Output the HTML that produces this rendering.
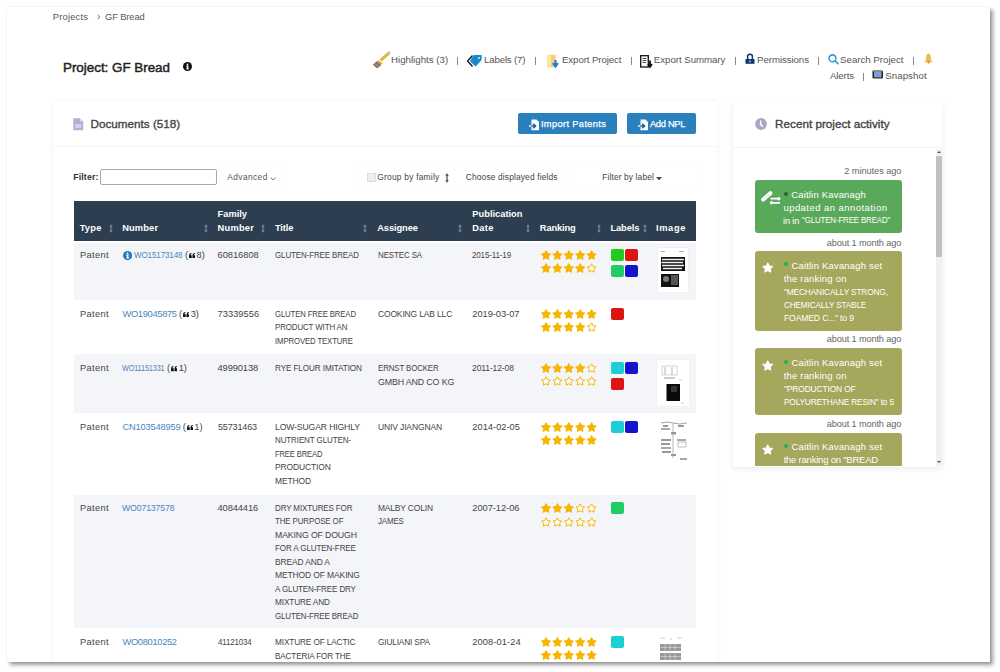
<!DOCTYPE html>
<html><head><meta charset="utf-8"><style>
html,body{margin:0;padding:0;background:#fff;width:1000px;height:672px;overflow:hidden}
#frame{position:absolute;left:7px;top:7px;width:983px;height:655px;background:#fff;box-shadow:0 0 2px 0.5px rgba(0,0,0,0.08), 2.5px 2.5px 4px rgba(0,0,0,0.38);overflow:hidden}
#inner{position:absolute;left:-7px;top:-7px;width:1000px;height:672px}
.t{position:absolute;white-space:pre;font-family:"Liberation Sans", sans-serif;transform-origin:0 0}
</style></head><body>
<div id="frame"><div id="inner">
<span class="t" style="left:52.84px;top:12.99px;font-size:9.3px;line-height:9.3px;font-weight:400;color:#555;letter-spacing:0.201px">Projects</span>
<span class="t" style="left:96.90px;top:12.40px;font-size:10px;line-height:10px;font-weight:400;color:#666;letter-spacing:0.000px">›</span>
<span class="t" style="left:105.04px;top:12.99px;font-size:9.3px;line-height:9.3px;font-weight:400;color:#555;letter-spacing:-0.102px">GF Bread</span>
<span class="t" style="left:63.00px;top:60.91px;font-size:13.4px;line-height:13.4px;font-weight:400;color:#222;letter-spacing:-0.011px;-webkit-text-stroke:0.45px #222">Project: GF Bread</span>
<svg style="position:absolute;left:183.2px;top:62px" width="9" height="9" viewBox="0 0 9 9"><circle cx="4.5" cy="4.5" r="4.5" fill="#111"/><rect x="3.8" y="3.6" width="1.5" height="3.6" fill="#fff"/><rect x="3.2" y="3.6" width="2.1" height="0.9" fill="#fff"/><rect x="3.2" y="6.4" width="2.8" height="0.9" fill="#fff"/><circle cx="4.5" cy="2.3" r="0.85" fill="#fff"/></svg>
<span class="t" style="left:391.02px;top:55.36px;font-size:9.7px;line-height:9.7px;font-weight:400;color:#555;letter-spacing:0.002px">Highlights (3)</span>
<span class="t" style="left:484.12px;top:55.36px;font-size:9.7px;line-height:9.7px;font-weight:400;color:#555;letter-spacing:-0.188px">Labels (7)</span>
<span class="t" style="left:562.02px;top:55.36px;font-size:9.7px;line-height:9.7px;font-weight:400;color:#555;letter-spacing:-0.111px">Export Project</span>
<span class="t" style="left:653.82px;top:55.36px;font-size:9.7px;line-height:9.7px;font-weight:400;color:#555;letter-spacing:-0.042px">Export Summary</span>
<span class="t" style="left:757.12px;top:55.36px;font-size:9.7px;line-height:9.7px;font-weight:400;color:#555;letter-spacing:-0.087px">Permissions</span>
<span class="t" style="left:840.12px;top:55.36px;font-size:9.7px;line-height:9.7px;font-weight:400;color:#555;letter-spacing:-0.019px">Search Project</span>
<span class="t" style="left:830.02px;top:71.35px;font-size:9.7px;line-height:9.7px;font-weight:400;color:#555;letter-spacing:-0.133px">Alerts</span>
<span class="t" style="left:885.22px;top:71.35px;font-size:9.7px;line-height:9.7px;font-weight:400;color:#555;letter-spacing:0.066px">Snapshot</span>
<div style="position:absolute;left:457.2px;top:56.5px;width:1px;height:8.5px;background:#888"></div>
<div style="position:absolute;left:534.5px;top:56.5px;width:1px;height:8.5px;background:#888"></div>
<div style="position:absolute;left:630.9px;top:56.5px;width:1px;height:8.5px;background:#888"></div>
<div style="position:absolute;left:735.0px;top:56.5px;width:1px;height:8.5px;background:#888"></div>
<div style="position:absolute;left:818.1px;top:56.5px;width:1px;height:8.5px;background:#888"></div>
<div style="position:absolute;left:913.1px;top:56.5px;width:1px;height:8.5px;background:#888"></div>
<div style="position:absolute;left:863.1px;top:72.5px;width:1px;height:8.5px;background:#888"></div>
<div style="position:absolute;left:53px;top:101px;width:664px;height:600px;background:#fff;box-shadow:0 0 5px rgba(0,0,0,0.07)"></div>
<div style="position:absolute;left:53px;top:146px;width:664px;height:1px;background:#f3f3f3"></div>
<div style="position:absolute;left:733px;top:102px;width:209px;height:365px;background:#fff;box-shadow:0 2px 6px rgba(0,0,0,0.08)"></div>
<div style="position:absolute;left:733px;top:147px;width:209px;height:1px;background:#f3f3f3"></div>
<span class="t" style="left:90.60px;top:117.56px;font-size:11.7px;line-height:11.7px;font-weight:400;color:#444;letter-spacing:-0.004px;-webkit-text-stroke:0.35px #444">Documents (518)</span>
<span class="t" style="left:775.10px;top:118.06px;font-size:11.7px;line-height:11.7px;font-weight:400;color:#444;letter-spacing:0.003px;-webkit-text-stroke:0.35px #444">Recent project activity</span>
<div style="position:absolute;left:518px;top:112.8px;width:99px;height:21.7px;background:#2980bd;border-radius:2px"></div>
<div style="position:absolute;left:627px;top:112.8px;width:69px;height:21.7px;background:#2980bd;border-radius:2px"></div>
<span class="t" style="left:540.94px;top:119.69px;font-size:9.3px;line-height:9.3px;font-weight:400;color:#fff;letter-spacing:0.349px;-webkit-text-stroke:0.25px #fff">Import Patents</span>
<span class="t" style="left:649.94px;top:119.69px;font-size:9.3px;line-height:9.3px;font-weight:400;color:#fff;letter-spacing:-0.286px;-webkit-text-stroke:0.25px #fff">Add NPL</span>
<span class="t" style="left:73.17px;top:172.52px;font-size:8.8px;line-height:8.8px;font-weight:700;color:#333;letter-spacing:0.144px">Filter:</span>
<div style="position:absolute;left:100.2px;top:168.5px;width:115px;height:14.5px;border:1px solid #a9a9a9;border-radius:2px;background:#fff"></div>
<span class="t" style="left:227.30px;top:172.86px;font-size:8.4px;line-height:8.4px;font-weight:400;color:#555;letter-spacing:0.393px">Advanced</span>
<div style="position:absolute;left:367.3px;top:173px;width:8.5px;height:8.5px;background:#eee;border:1px solid #ddd;box-sizing:border-box"></div>
<span class="t" style="left:377.30px;top:172.86px;font-size:8.4px;line-height:8.4px;font-weight:400;color:#444;letter-spacing:0.232px">Group by family</span>
<span class="t" style="left:465.80px;top:172.86px;font-size:8.4px;line-height:8.4px;font-weight:400;color:#444;letter-spacing:0.147px">Choose displayed fields</span>
<span class="t" style="left:602.30px;top:172.86px;font-size:8.4px;line-height:8.4px;font-weight:400;color:#444;letter-spacing:0.121px">Filter by label</span>
<div style="position:absolute;left:74px;top:201px;width:622px;height:40px;background:#2c3e50"></div>
<span class="t" style="left:79.64px;top:223.69px;font-size:9.3px;line-height:9.3px;font-weight:700;color:#fff;letter-spacing:0.228px">Type</span>
<span class="t" style="left:122.14px;top:223.69px;font-size:9.3px;line-height:9.3px;font-weight:700;color:#fff;letter-spacing:0.152px">Number</span>
<span class="t" style="left:217.54px;top:210.29px;font-size:9.3px;line-height:9.3px;font-weight:700;color:#fff;letter-spacing:0.009px">Family</span>
<span class="t" style="left:217.54px;top:223.69px;font-size:9.3px;line-height:9.3px;font-weight:700;color:#fff;letter-spacing:0.232px">Number</span>
<span class="t" style="left:274.94px;top:223.69px;font-size:9.3px;line-height:9.3px;font-weight:700;color:#fff;letter-spacing:-0.113px">Title</span>
<span class="t" style="left:377.24px;top:223.69px;font-size:9.3px;line-height:9.3px;font-weight:700;color:#fff;letter-spacing:-0.092px">Assignee</span>
<span class="t" style="left:472.34px;top:210.29px;font-size:9.3px;line-height:9.3px;font-weight:700;color:#fff;letter-spacing:-0.001px">Publication</span>
<span class="t" style="left:472.34px;top:223.69px;font-size:9.3px;line-height:9.3px;font-weight:700;color:#fff;letter-spacing:0.281px">Date</span>
<span class="t" style="left:539.84px;top:223.69px;font-size:9.3px;line-height:9.3px;font-weight:700;color:#fff;letter-spacing:-0.148px">Ranking</span>
<span class="t" style="left:610.44px;top:223.69px;font-size:9.3px;line-height:9.3px;font-weight:700;color:#fff;letter-spacing:-0.091px">Labels</span>
<span class="t" style="left:655.94px;top:223.69px;font-size:9.3px;line-height:9.3px;font-weight:700;color:#fff;letter-spacing:0.656px">Image</span>
<svg style="position:absolute;left:108.6px;top:223.8px;opacity:.5" width="4" height="9" viewBox="0 0 4 9"><path d="M2 0.2 L3.8 2.8 H2.6 V6.2 H3.8 L2 8.8 L0.2 6.2 H1.4 V2.8 H0.2 Z" fill="#ccc"/></svg>
<svg style="position:absolute;left:203.7px;top:223.8px;opacity:.5" width="4" height="9" viewBox="0 0 4 9"><path d="M2 0.2 L3.8 2.8 H2.6 V6.2 H3.8 L2 8.8 L0.2 6.2 H1.4 V2.8 H0.2 Z" fill="#ccc"/></svg>
<svg style="position:absolute;left:261px;top:223.8px;opacity:.5" width="4" height="9" viewBox="0 0 4 9"><path d="M2 0.2 L3.8 2.8 H2.6 V6.2 H3.8 L2 8.8 L0.2 6.2 H1.4 V2.8 H0.2 Z" fill="#ccc"/></svg>
<svg style="position:absolute;left:363.4px;top:223.8px;opacity:.5" width="4" height="9" viewBox="0 0 4 9"><path d="M2 0.2 L3.8 2.8 H2.6 V6.2 H3.8 L2 8.8 L0.2 6.2 H1.4 V2.8 H0.2 Z" fill="#ccc"/></svg>
<svg style="position:absolute;left:458.3px;top:223.8px;opacity:.5" width="4" height="9" viewBox="0 0 4 9"><path d="M2 0.2 L3.8 2.8 H2.6 V6.2 H3.8 L2 8.8 L0.2 6.2 H1.4 V2.8 H0.2 Z" fill="#ccc"/></svg>
<svg style="position:absolute;left:526.4px;top:223.8px;opacity:.5" width="4" height="9" viewBox="0 0 4 9"><path d="M2 0.2 L3.8 2.8 H2.6 V6.2 H3.8 L2 8.8 L0.2 6.2 H1.4 V2.8 H0.2 Z" fill="#ccc"/></svg>
<svg style="position:absolute;left:597px;top:223.8px;opacity:.5" width="4" height="9" viewBox="0 0 4 9"><path d="M2 0.2 L3.8 2.8 H2.6 V6.2 H3.8 L2 8.8 L0.2 6.2 H1.4 V2.8 H0.2 Z" fill="#ccc"/></svg>
<svg style="position:absolute;left:642.6px;top:223.8px;opacity:.5" width="4" height="9" viewBox="0 0 4 9"><path d="M2 0.2 L3.8 2.8 H2.6 V6.2 H3.8 L2 8.8 L0.2 6.2 H1.4 V2.8 H0.2 Z" fill="#ccc"/></svg>
<div style="position:absolute;left:74px;top:241px;width:622px;height:59px;background:#f4f5f8"></div>
<div style="position:absolute;left:74px;top:300px;width:622px;height:54px;background:#fff"></div>
<div style="position:absolute;left:74px;top:354px;width:622px;height:59px;background:#f4f5f8"></div>
<div style="position:absolute;left:74px;top:413px;width:622px;height:81.5px;background:#fff"></div>
<div style="position:absolute;left:74px;top:494.5px;width:622px;height:133.5px;background:#f4f5f8"></div>
<div style="position:absolute;left:74px;top:628px;width:622px;height:72px;background:#fff"></div>
<div style="position:absolute;left:74px;top:241px;width:622px;height:1.5px;background:#fff"></div>
<span class="t" style="left:80.04px;top:250.69px;font-size:9.3px;line-height:9.3px;font-weight:400;color:#444;letter-spacing:0.322px">Patent</span>
<span class="t" style="left:134.44px;top:250.69px;font-size:9.3px;line-height:9.3px;font-weight:400;color:#4a87bd;letter-spacing:-0.150px;transform:scaleX(0.8657)">WO15173148</span>
<span class="t" style="left:184.94px;top:250.69px;font-size:9.3px;line-height:9.3px;font-weight:400;color:#444;letter-spacing:0.000px">(</span>
<svg style="position:absolute;left:188.9px;top:252.79999999999998px" width="6.4" height="5.5" viewBox="0 0 7 6"><path d="M0 3.2 C0 1.2 1 0.2 2.6 0 L2.8 0.9 C2 1.1 1.6 1.6 1.6 2.5 H3 V5.8 H0 Z M3.8 3.2 C3.8 1.2 4.8 0.2 6.4 0 L6.6 0.9 C5.8 1.1 5.4 1.6 5.4 2.5 H6.8 V5.8 H3.8 Z" fill="#111"/></svg>
<span class="t" style="left:196.54px;top:250.69px;font-size:9.3px;line-height:9.3px;font-weight:400;color:#444;letter-spacing:0.000px">8)</span>
<span class="t" style="left:217.54px;top:250.69px;font-size:9.3px;line-height:9.3px;font-weight:400;color:#444;letter-spacing:-0.025px">60816808</span>
<span class="t" style="left:275.25px;top:250.78px;font-size:9.2px;line-height:9.2px;font-weight:400;color:#444;letter-spacing:-0.150px;transform:scaleX(0.8691)">GLUTEN-FREE BREAD</span>
<span class="t" style="left:377.65px;top:250.78px;font-size:9.2px;line-height:9.2px;font-weight:400;color:#444;letter-spacing:-0.150px;transform:scaleX(0.8687)">NESTEC SA</span>
<span class="t" style="left:472.34px;top:250.69px;font-size:9.3px;line-height:9.3px;font-weight:400;color:#444;letter-spacing:-0.150px;transform:scaleX(0.8589)">2015-11-19</span>
<span class="t" style="left:80.04px;top:309.69px;font-size:9.3px;line-height:9.3px;font-weight:400;color:#444;letter-spacing:0.322px">Patent</span>
<span class="t" style="left:122.44px;top:309.69px;font-size:9.3px;line-height:9.3px;font-weight:400;color:#4a87bd;letter-spacing:-0.308px">WO19045875</span>
<span class="t" style="left:179.04px;top:309.69px;font-size:9.3px;line-height:9.3px;font-weight:400;color:#444;letter-spacing:0.000px">(</span>
<svg style="position:absolute;left:183.0px;top:311.8px" width="6.4" height="5.5" viewBox="0 0 7 6"><path d="M0 3.2 C0 1.2 1 0.2 2.6 0 L2.8 0.9 C2 1.1 1.6 1.6 1.6 2.5 H3 V5.8 H0 Z M3.8 3.2 C3.8 1.2 4.8 0.2 6.4 0 L6.6 0.9 C5.8 1.1 5.4 1.6 5.4 2.5 H6.8 V5.8 H3.8 Z" fill="#111"/></svg>
<span class="t" style="left:190.64px;top:309.69px;font-size:9.3px;line-height:9.3px;font-weight:400;color:#444;letter-spacing:0.000px">3)</span>
<span class="t" style="left:217.54px;top:309.69px;font-size:9.3px;line-height:9.3px;font-weight:400;color:#444;letter-spacing:0.032px">73339556</span>
<span class="t" style="left:275.25px;top:309.78px;font-size:9.2px;line-height:9.2px;font-weight:400;color:#444;letter-spacing:-0.150px;transform:scaleX(0.8426)">GLUTEN FREE BREAD</span>
<span class="t" style="left:275.25px;top:323.23px;font-size:9.2px;line-height:9.2px;font-weight:400;color:#444;letter-spacing:-0.150px;transform:scaleX(0.8632)">PRODUCT WITH AN</span>
<span class="t" style="left:275.25px;top:336.68px;font-size:9.2px;line-height:9.2px;font-weight:400;color:#444;letter-spacing:-0.150px;transform:scaleX(0.8475)">IMPROVED TEXTURE</span>
<span class="t" style="left:377.65px;top:309.78px;font-size:9.2px;line-height:9.2px;font-weight:400;color:#444;letter-spacing:-0.150px;transform:scaleX(0.9216)">COOKING LAB LLC</span>
<span class="t" style="left:472.34px;top:309.69px;font-size:9.3px;line-height:9.3px;font-weight:400;color:#444;letter-spacing:-0.051px">2019-03-07</span>
<span class="t" style="left:80.04px;top:364.10px;font-size:9.3px;line-height:9.3px;font-weight:400;color:#444;letter-spacing:0.322px">Patent</span>
<span class="t" style="left:122.44px;top:364.10px;font-size:9.3px;line-height:9.3px;font-weight:400;color:#4a87bd;letter-spacing:-0.150px;transform:scaleX(0.7795)">WO11151331</span>
<span class="t" style="left:167.04px;top:364.10px;font-size:9.3px;line-height:9.3px;font-weight:400;color:#444;letter-spacing:0.000px">(</span>
<svg style="position:absolute;left:171.0px;top:366.20000000000005px" width="6.4" height="5.5" viewBox="0 0 7 6"><path d="M0 3.2 C0 1.2 1 0.2 2.6 0 L2.8 0.9 C2 1.1 1.6 1.6 1.6 2.5 H3 V5.8 H0 Z M3.8 3.2 C3.8 1.2 4.8 0.2 6.4 0 L6.6 0.9 C5.8 1.1 5.4 1.6 5.4 2.5 H6.8 V5.8 H3.8 Z" fill="#111"/></svg>
<span class="t" style="left:178.64px;top:364.10px;font-size:9.3px;line-height:9.3px;font-weight:400;color:#444;letter-spacing:0.000px">1)</span>
<span class="t" style="left:217.54px;top:364.10px;font-size:9.3px;line-height:9.3px;font-weight:400;color:#444;letter-spacing:-0.111px">49990138</span>
<span class="t" style="left:275.25px;top:364.18px;font-size:9.2px;line-height:9.2px;font-weight:400;color:#444;letter-spacing:-0.150px;transform:scaleX(0.8937)">RYE FLOUR IMITATION</span>
<span class="t" style="left:377.65px;top:364.18px;font-size:9.2px;line-height:9.2px;font-weight:400;color:#444;letter-spacing:-0.150px;transform:scaleX(0.8588)">ERNST BOCKER</span>
<span class="t" style="left:377.65px;top:377.63px;font-size:9.2px;line-height:9.2px;font-weight:400;color:#444;letter-spacing:-0.150px;transform:scaleX(0.9631)">GMBH AND CO KG</span>
<span class="t" style="left:472.34px;top:364.10px;font-size:9.3px;line-height:9.3px;font-weight:400;color:#444;letter-spacing:-0.150px;transform:scaleX(0.9226)">2011-12-08</span>
<span class="t" style="left:80.04px;top:422.69px;font-size:9.3px;line-height:9.3px;font-weight:400;color:#444;letter-spacing:0.322px">Patent</span>
<span class="t" style="left:122.44px;top:422.69px;font-size:9.3px;line-height:9.3px;font-weight:400;color:#4a87bd;letter-spacing:-0.177px">CN103548959</span>
<span class="t" style="left:182.64px;top:422.69px;font-size:9.3px;line-height:9.3px;font-weight:400;color:#444;letter-spacing:0.000px">(</span>
<svg style="position:absolute;left:186.6px;top:424.8px" width="6.4" height="5.5" viewBox="0 0 7 6"><path d="M0 3.2 C0 1.2 1 0.2 2.6 0 L2.8 0.9 C2 1.1 1.6 1.6 1.6 2.5 H3 V5.8 H0 Z M3.8 3.2 C3.8 1.2 4.8 0.2 6.4 0 L6.6 0.9 C5.8 1.1 5.4 1.6 5.4 2.5 H6.8 V5.8 H3.8 Z" fill="#111"/></svg>
<span class="t" style="left:194.24px;top:422.69px;font-size:9.3px;line-height:9.3px;font-weight:400;color:#444;letter-spacing:0.000px">1)</span>
<span class="t" style="left:217.54px;top:422.69px;font-size:9.3px;line-height:9.3px;font-weight:400;color:#444;letter-spacing:-0.150px;transform:scaleX(0.9696)">55731463</span>
<span class="t" style="left:275.25px;top:422.78px;font-size:9.2px;line-height:9.2px;font-weight:400;color:#444;letter-spacing:-0.150px;transform:scaleX(0.9410)">LOW-SUGAR HIGHLY</span>
<span class="t" style="left:275.25px;top:436.23px;font-size:9.2px;line-height:9.2px;font-weight:400;color:#444;letter-spacing:-0.150px;transform:scaleX(0.8745)">NUTRIENT GLUTEN-</span>
<span class="t" style="left:275.25px;top:449.68px;font-size:9.2px;line-height:9.2px;font-weight:400;color:#444;letter-spacing:-0.150px;transform:scaleX(0.8262)">FREE BREAD</span>
<span class="t" style="left:275.25px;top:463.13px;font-size:9.2px;line-height:9.2px;font-weight:400;color:#444;letter-spacing:-0.150px;transform:scaleX(0.9236)">PRODUCTION</span>
<span class="t" style="left:275.25px;top:476.58px;font-size:9.2px;line-height:9.2px;font-weight:400;color:#444;letter-spacing:-0.150px;transform:scaleX(0.9216)">METHOD</span>
<span class="t" style="left:377.65px;top:422.78px;font-size:9.2px;line-height:9.2px;font-weight:400;color:#444;letter-spacing:-0.150px;transform:scaleX(0.9267)">UNIV JIANGNAN</span>
<span class="t" style="left:472.34px;top:422.69px;font-size:9.3px;line-height:9.3px;font-weight:400;color:#444;letter-spacing:0.004px">2014-02-05</span>
<span class="t" style="left:80.04px;top:503.89px;font-size:9.3px;line-height:9.3px;font-weight:400;color:#444;letter-spacing:0.322px">Patent</span>
<span class="t" style="left:122.44px;top:503.89px;font-size:9.3px;line-height:9.3px;font-weight:400;color:#4a87bd;letter-spacing:-0.150px;transform:scaleX(0.9371)">WO07137578</span>
<span class="t" style="left:217.54px;top:503.89px;font-size:9.3px;line-height:9.3px;font-weight:400;color:#444;letter-spacing:-0.111px">40844416</span>
<span class="t" style="left:275.25px;top:503.98px;font-size:9.2px;line-height:9.2px;font-weight:400;color:#444;letter-spacing:-0.150px;transform:scaleX(0.8728)">DRY MIXTURES FOR</span>
<span class="t" style="left:275.25px;top:517.43px;font-size:9.2px;line-height:9.2px;font-weight:400;color:#444;letter-spacing:-0.150px;transform:scaleX(0.8647)">THE PURPOSE OF</span>
<span class="t" style="left:275.25px;top:530.88px;font-size:9.2px;line-height:9.2px;font-weight:400;color:#444;letter-spacing:-0.150px;transform:scaleX(0.9511)">MAKING OF DOUGH</span>
<span class="t" style="left:275.25px;top:544.33px;font-size:9.2px;line-height:9.2px;font-weight:400;color:#444;letter-spacing:-0.150px;transform:scaleX(0.8799)">FOR A GLUTEN-FREE</span>
<span class="t" style="left:275.25px;top:557.78px;font-size:9.2px;line-height:9.2px;font-weight:400;color:#444;letter-spacing:-0.150px;transform:scaleX(0.9200)">BREAD AND A</span>
<span class="t" style="left:275.25px;top:571.23px;font-size:9.2px;line-height:9.2px;font-weight:400;color:#444;letter-spacing:-0.150px;transform:scaleX(0.9272)">METHOD OF MAKING</span>
<span class="t" style="left:275.25px;top:584.68px;font-size:9.2px;line-height:9.2px;font-weight:400;color:#444;letter-spacing:-0.150px;transform:scaleX(0.8767)">A GLUTEN-FREE DRY</span>
<span class="t" style="left:275.25px;top:598.13px;font-size:9.2px;line-height:9.2px;font-weight:400;color:#444;letter-spacing:-0.150px;transform:scaleX(0.8973)">MIXTURE AND</span>
<span class="t" style="left:275.25px;top:611.58px;font-size:9.2px;line-height:9.2px;font-weight:400;color:#444;letter-spacing:-0.150px;transform:scaleX(0.8640)">GLUTEN-FREE BREAD</span>
<span class="t" style="left:377.65px;top:503.98px;font-size:9.2px;line-height:9.2px;font-weight:400;color:#444;letter-spacing:-0.150px;transform:scaleX(0.9148)">MALBY COLIN</span>
<span class="t" style="left:377.65px;top:517.43px;font-size:9.2px;line-height:9.2px;font-weight:400;color:#444;letter-spacing:-0.150px;transform:scaleX(0.8588)">JAMES</span>
<span class="t" style="left:472.34px;top:503.89px;font-size:9.3px;line-height:9.3px;font-weight:400;color:#444;letter-spacing:-0.051px">2007-12-06</span>
<span class="t" style="left:80.04px;top:638.00px;font-size:9.3px;line-height:9.3px;font-weight:400;color:#444;letter-spacing:0.322px">Patent</span>
<span class="t" style="left:122.44px;top:638.00px;font-size:9.3px;line-height:9.3px;font-weight:400;color:#4a87bd;letter-spacing:-0.308px">WO08010252</span>
<span class="t" style="left:217.54px;top:638.00px;font-size:9.3px;line-height:9.3px;font-weight:400;color:#444;letter-spacing:-0.150px;transform:scaleX(0.8502)">41121034</span>
<span class="t" style="left:275.25px;top:638.08px;font-size:9.2px;line-height:9.2px;font-weight:400;color:#444;letter-spacing:-0.150px;transform:scaleX(0.8995)">MIXTURE OF LACTIC</span>
<span class="t" style="left:275.25px;top:651.53px;font-size:9.2px;line-height:9.2px;font-weight:400;color:#444;letter-spacing:-0.150px;transform:scaleX(0.8847)">BACTERIA FOR THE</span>
<span class="t" style="left:377.65px;top:638.08px;font-size:9.2px;line-height:9.2px;font-weight:400;color:#444;letter-spacing:-0.150px;transform:scaleX(0.8977)">GIULIANI SPA</span>
<span class="t" style="left:472.34px;top:638.00px;font-size:9.3px;line-height:9.3px;font-weight:400;color:#444;letter-spacing:0.093px">2008-01-24</span>
<svg style="position:absolute;left:122.8px;top:251px" width="9.2" height="9.2" viewBox="0 0 9 9"><circle cx="4.5" cy="4.5" r="4.5" fill="#2b7bba"/><rect x="3.8" y="3.6" width="1.5" height="3.6" fill="#fff"/><rect x="3.2" y="3.6" width="2.1" height="0.9" fill="#fff"/><rect x="3.2" y="6.4" width="2.8" height="0.9" fill="#fff"/><circle cx="4.5" cy="2.3" r="0.85" fill="#fff"/></svg>
<div style="position:absolute;left:733px;top:148px;width:202.5px;height:317.5px;overflow:hidden"><div style="position:absolute;left:-733px;top:-148px;width:1000px;height:672px">
<span class="t" style="left:844.25px;top:167.48px;font-size:9.2px;line-height:9.2px;font-weight:400;color:#666;letter-spacing:-0.043px">2 minutes ago</span>
<div style="position:absolute;left:754.8px;top:180.1px;width:147.4px;height:53.3px;background:#5aa95b;border-radius:3px"></div>
<span class="t" style="left:791.13px;top:189.73px;font-size:9.5px;line-height:9.5px;font-weight:400;color:#fff;letter-spacing:0.191px">Caitlin Kavanagh</span>
<span class="t" style="left:783.43px;top:202.93px;font-size:9.5px;line-height:9.5px;font-weight:400;color:#fff;letter-spacing:0.447px">updated an annotation</span>
<span class="t" style="left:783.43px;top:215.93px;font-size:9.5px;line-height:9.5px;font-weight:400;color:#fff;letter-spacing:-0.150px;transform:scaleX(0.9681)">in in</span>
<span class="t" style="left:802.26px;top:216.35px;font-size:9.0px;line-height:9.0px;font-weight:400;color:#fff;letter-spacing:-0.150px;transform:scaleX(0.8768)">&quot;GLUTEN-FREE BREAD&quot;</span>
<div style="position:absolute;left:784px;top:191.5px;width:4px;height:4px;border-radius:50%;background:#1e6b2a"></div>
<span class="t" style="left:826.85px;top:238.98px;font-size:9.2px;line-height:9.2px;font-weight:400;color:#666;letter-spacing:-0.139px">about 1 month ago</span>
<div style="position:absolute;left:754.8px;top:251.2px;width:147.4px;height:79.5px;background:#a4a75c;border-radius:3px"></div>
<span class="t" style="left:791.43px;top:260.82px;font-size:9.5px;line-height:9.5px;font-weight:400;color:#fff;letter-spacing:0.187px">Caitlin Kavanagh set</span>
<span class="t" style="left:783.63px;top:274.02px;font-size:9.5px;line-height:9.5px;font-weight:400;color:#fff;letter-spacing:0.199px">the ranking on</span>
<span class="t" style="left:783.96px;top:287.65px;font-size:9.0px;line-height:9.0px;font-weight:400;color:#fff;letter-spacing:-0.150px;transform:scaleX(0.9212)">&quot;MECHANICALLY STRONG,</span>
<span class="t" style="left:783.96px;top:300.85px;font-size:9.0px;line-height:9.0px;font-weight:400;color:#fff;letter-spacing:-0.150px;transform:scaleX(0.9079)">CHEMICALLY STABLE</span>
<span class="t" style="left:783.96px;top:314.05px;font-size:9.0px;line-height:9.0px;font-weight:400;color:#fff;letter-spacing:-0.150px;transform:scaleX(0.9547)">FOAMED C...&quot; to 9</span>
<div style="position:absolute;left:784px;top:262.4px;width:4px;height:4px;border-radius:50%;background:#22b050"></div>
<span class="t" style="left:826.85px;top:335.48px;font-size:9.2px;line-height:9.2px;font-weight:400;color:#666;letter-spacing:-0.139px">about 1 month ago</span>
<div style="position:absolute;left:754.8px;top:348.4px;width:147.4px;height:66.9px;background:#a4a75c;border-radius:3px"></div>
<span class="t" style="left:791.43px;top:358.03px;font-size:9.5px;line-height:9.5px;font-weight:400;color:#fff;letter-spacing:0.187px">Caitlin Kavanagh set</span>
<span class="t" style="left:783.63px;top:371.23px;font-size:9.5px;line-height:9.5px;font-weight:400;color:#fff;letter-spacing:0.199px">the ranking on</span>
<span class="t" style="left:783.96px;top:384.85px;font-size:9.0px;line-height:9.0px;font-weight:400;color:#fff;letter-spacing:-0.150px;transform:scaleX(0.9342)">&quot;PRODUCTION OF</span>
<span class="t" style="left:783.96px;top:398.05px;font-size:9.0px;line-height:9.0px;font-weight:400;color:#fff;letter-spacing:-0.150px;transform:scaleX(0.9158)">POLYURETHANE RESIN&quot; to 5</span>
<div style="position:absolute;left:784px;top:359.6px;width:4px;height:4px;border-radius:50%;background:#22b050"></div>
<span class="t" style="left:826.85px;top:419.98px;font-size:9.2px;line-height:9.2px;font-weight:400;color:#666;letter-spacing:-0.139px">about 1 month ago</span>
<div style="position:absolute;left:754.8px;top:432.5px;width:147.4px;height:60px;background:#a4a75c;border-radius:3px"></div>
<span class="t" style="left:791.43px;top:442.23px;font-size:9.5px;line-height:9.5px;font-weight:400;color:#fff;letter-spacing:0.187px">Caitlin Kavanagh set</span>
<span class="t" style="left:783.63px;top:455.43px;font-size:9.5px;line-height:9.5px;font-weight:400;color:#fff;letter-spacing:-0.218px">the ranking on &quot;BREAD</span>
<div style="position:absolute;left:784px;top:443.8px;width:4px;height:4px;border-radius:50%;background:#22b050"></div>
<svg style="position:absolute;left:761px;top:190px" width="21" height="15" viewBox="0 0 21 15"><path d="M2.2 9.6 L9.4 3.2" stroke="#fff" stroke-width="4" stroke-linecap="round"/><path d="M3.2 9 L8.6 4.2" stroke="#b8d8b8" stroke-width="0.8"/><path d="M9.5 8.7 H18.5 M10 12.8 H19" stroke="#fff" stroke-width="1.8" fill="none"/><circle cx="17.8" cy="8.7" r="1.7" fill="#fff"/><circle cx="10.6" cy="12.8" r="1.7" fill="#fff"/></svg>
<svg style="position:absolute;left:762px;top:262px" width="11.5" height="11" viewBox="0 0 10 10"><path d="M5.00 0.80 L6.44 3.62 L9.36 4.0 L7.23 6.16 L7.68 9.16 L5.00 7.75 L2.32 9.16 L2.77 6.16 L0.64 4.0 L3.56 3.62 Z" fill="#fff" stroke="#fff" stroke-width="1" stroke-linejoin="round"/></svg>
<svg style="position:absolute;left:762px;top:359.5px" width="11.5" height="11" viewBox="0 0 10 10"><path d="M5.00 0.80 L6.44 3.62 L9.36 4.0 L7.23 6.16 L7.68 9.16 L5.00 7.75 L2.32 9.16 L2.77 6.16 L0.64 4.0 L3.56 3.62 Z" fill="#fff" stroke="#fff" stroke-width="1" stroke-linejoin="round"/></svg>
<svg style="position:absolute;left:762px;top:443.5px" width="11.5" height="11" viewBox="0 0 10 10"><path d="M5.00 0.80 L6.44 3.62 L9.36 4.0 L7.23 6.16 L7.68 9.16 L5.00 7.75 L2.32 9.16 L2.77 6.16 L0.64 4.0 L3.56 3.62 Z" fill="#fff" stroke="#fff" stroke-width="1" stroke-linejoin="round"/></svg>
</div></div>
<svg style="position:absolute;left:372px;top:52px;overflow:visible" width="18" height="17" viewBox="0 0 18 17"><path d="M16.8 1.2 L9.5 7.6" stroke="#e2b428" stroke-width="3" stroke-linecap="round"/><path d="M17 1 L14.8 3" stroke="#b4cc7a" stroke-width="2.6" stroke-linecap="round"/><path d="M6.6 8.2 L10.6 11.4 L8.6 13 L4.8 9.8 Z" fill="#d8a62a"/><path d="M4.6 9.2 L9.2 13.2 L5.2 16.6 L0.8 12.8 Z" fill="#8c7464"/><path d="M3 11.5 L6.6 14.6" stroke="#b8a8a8" stroke-width="0.9"/></svg>
<svg style="position:absolute;left:466px;top:54px;overflow:visible" width="18" height="14" viewBox="0 0 18 14"><path d="M6.5 1.5 L1.5 7 L6.5 12.5" fill="none" stroke="#111" stroke-width="1.3"/><path d="M8 1 H15.6 V6 L9.6 12.6 L3.8 7 Z" fill="#1a88cc"/><rect x="12" y="3" width="2" height="2" fill="#7fe8f8"/></svg>
<svg style="position:absolute;left:547px;top:54px;overflow:visible" width="13" height="14" viewBox="0 0 13 14"><rect x="0.4" y="0.8" width="8.2" height="12.6" fill="#f5d070"/><rect x="1" y="1.4" width="3" height="11.4" fill="#fae7a8"/><path d="M8.5 6 V11 M6 9.2 L8.5 12.5 L11 9.2" stroke="#1a7ad8" stroke-width="2" fill="none"/></svg>
<svg style="position:absolute;left:640px;top:54.5px;overflow:visible" width="13" height="13" viewBox="0 0 13 13"><rect x="0.7" y="0.7" width="7.6" height="11.3" fill="#fff" stroke="#111" stroke-width="1.3"/><path d="M2.5 3.5 H6.5 M2.5 5.5 H6.5 M2.5 7.5 H6" stroke="#333" stroke-width="0.9"/><path d="M10 5.5 V11 M8 9 L10 12 L12 9" stroke="#111" stroke-width="1.8" fill="none"/></svg>
<svg style="position:absolute;left:745px;top:53px;overflow:visible" width="10" height="11" viewBox="0 0 10 11"><path d="M2.6 6 V3.6 A2.4 2.4 0 0 1 7.4 3.6 V6" fill="none" stroke="#0d3868" stroke-width="1.5"/><rect x="0.5" y="6" width="9" height="4.8" fill="#0d3868"/><rect x="4.4" y="7.3" width="1.2" height="2.2" fill="#bcd"/></svg>
<svg style="position:absolute;left:827.5px;top:54px;overflow:visible" width="11" height="11" viewBox="0 0 11 11"><circle cx="4.5" cy="4.3" r="3.4" fill="none" stroke="#3a9ad8" stroke-width="1.6"/><path d="M7 6.8 L10 9.6" stroke="#3a9ad8" stroke-width="1.8" stroke-linecap="round"/></svg>
<svg style="position:absolute;left:923.5px;top:53px;overflow:visible" width="9" height="11" viewBox="0 0 9 11"><path d="M4.5 0.8 C2.6 0.8 2.3 2.5 2.3 4.5 C2.3 6.8 1.2 8 0.5 9.3 H8.5 C7.8 8 6.7 6.8 6.7 4.5 C6.7 2.5 6.4 0.8 4.5 0.8 Z" fill="#f2b840"/><path d="M3 1.5 Q4.5 0 6 1.5" fill="#9cd060"/><circle cx="4.5" cy="9.6" r="1" fill="#c08020"/></svg>
<svg style="position:absolute;left:872px;top:70px;overflow:visible" width="11.5" height="9" viewBox="0 0 11.5 9"><rect x="0.5" y="0.5" width="10.5" height="8" rx="1" fill="#222"/><rect x="2" y="1.6" width="7.5" height="5.8" fill="#7aa0d8"/><rect x="1.5" y="0.8" width="8.5" height="1.2" fill="#888"/></svg>
<svg style="position:absolute;left:72.5px;top:117.5px;overflow:visible" width="10.5" height="12.5" viewBox="0 0 10.5 12.5"><path d="M0.3 0.3 H7 L10.2 3.5 V12.2 H0.3 Z" fill="#b3b0d2"/><path d="M7 0.3 V3.5 H10.2" fill="#dcdaf0"/><rect x="2.2" y="6" width="6" height="4" fill="#d5d3ea"/></svg>
<svg style="position:absolute;left:755px;top:117.5px;overflow:visible" width="12" height="12" viewBox="0 0 12 12"><circle cx="6" cy="6" r="5.9" fill="#a8a8c6"/><path d="M5.6 2.4 V6.6 L8 8.6" fill="none" stroke="#fff" stroke-width="1.4"/></svg>
<svg style="position:absolute;left:528.5px;top:118.5px;overflow:visible" width="11" height="12" viewBox="0 0 11 12"><path d="M2.5 0.5 H7.5 L10 3 V11.2 H2.5 Z" fill="#fff"/><path d="M0 7 H6.2 M4.2 4.8 L6.6 7 L4.2 9.2" stroke="#1d5d8e" stroke-width="1.5" fill="none"/><path d="M0 7 H2.4" stroke="#fff" stroke-width="1.5"/></svg>
<svg style="position:absolute;left:637.5px;top:118.5px;overflow:visible" width="11" height="12" viewBox="0 0 11 12"><path d="M2.5 0.5 H7.5 L10 3 V11.2 H2.5 Z" fill="#fff"/><path d="M0 7 H6.2 M4.2 4.8 L6.6 7 L4.2 9.2" stroke="#1d5d8e" stroke-width="1.5" fill="none"/><path d="M0 7 H2.4" stroke="#fff" stroke-width="1.5"/></svg>
<svg style="position:absolute;left:269.5px;top:176.5px;overflow:visible" width="6" height="4" viewBox="0 0 6 4"><path d="M0.5 0.5 L3 3 L5.5 0.5" fill="none" stroke="#666" stroke-width="0.9"/></svg>
<svg style="position:absolute;left:444.5px;top:172.5px;overflow:visible" width="4" height="10" viewBox="0 0 4 10"><path d="M2 0.3 L3.8 2.8 H0.2 Z M2 9.7 L3.8 7.2 H0.2 Z" fill="#444"/><rect x="1.4" y="2.5" width="1.2" height="5" fill="#444"/></svg>
<svg style="position:absolute;left:655.5px;top:177px;overflow:visible" width="6" height="3.5" viewBox="0 0 6 3.5"><path d="M0 0 H6 L3 3.2 Z" fill="#444"/></svg>
<div style="position:absolute;left:220px;top:164px;width:64px;height:26px;box-shadow:0 0 2px rgba(0,0,0,0.025)"></div>
<div style="position:absolute;left:360px;top:164px;width:95px;height:26px;box-shadow:0 0 2px rgba(0,0,0,0.025)"></div>
<div style="position:absolute;left:455px;top:164px;width:112px;height:26px;box-shadow:0 0 2px rgba(0,0,0,0.025)"></div>
<div style="position:absolute;left:570px;top:164px;width:132px;height:26px;box-shadow:0 0 2px rgba(0,0,0,0.025)"></div>
<svg style="position:absolute;left:540.8px;top:249.6px;overflow:visible" width="57" height="10" viewBox="0 0 57 10"><path transform="translate(0.0,0)" d="M5.00 0.80 L6.44 3.62 L9.36 4.0 L7.23 6.16 L7.68 9.16 L5.00 7.75 L2.32 9.16 L2.77 6.16 L0.64 4.0 L3.56 3.62 Z" fill="#f7b500" stroke="#f7b500" stroke-width="1.1" stroke-linejoin="round"/><path transform="translate(11.4,0)" d="M5.00 0.80 L6.44 3.62 L9.36 4.0 L7.23 6.16 L7.68 9.16 L5.00 7.75 L2.32 9.16 L2.77 6.16 L0.64 4.0 L3.56 3.62 Z" fill="#f7b500" stroke="#f7b500" stroke-width="1.1" stroke-linejoin="round"/><path transform="translate(22.8,0)" d="M5.00 0.80 L6.44 3.62 L9.36 4.0 L7.23 6.16 L7.68 9.16 L5.00 7.75 L2.32 9.16 L2.77 6.16 L0.64 4.0 L3.56 3.62 Z" fill="#f7b500" stroke="#f7b500" stroke-width="1.1" stroke-linejoin="round"/><path transform="translate(34.2,0)" d="M5.00 0.80 L6.44 3.62 L9.36 4.0 L7.23 6.16 L7.68 9.16 L5.00 7.75 L2.32 9.16 L2.77 6.16 L0.64 4.0 L3.56 3.62 Z" fill="#f7b500" stroke="#f7b500" stroke-width="1.1" stroke-linejoin="round"/><path transform="translate(45.6,0)" d="M5.00 0.80 L6.44 3.62 L9.36 4.0 L7.23 6.16 L7.68 9.16 L5.00 7.75 L2.32 9.16 L2.77 6.16 L0.64 4.0 L3.56 3.62 Z" fill="#f7b500" stroke="#f7b500" stroke-width="1.1" stroke-linejoin="round"/></svg>
<svg style="position:absolute;left:540.8px;top:263.0px;overflow:visible" width="57" height="10" viewBox="0 0 57 10"><path transform="translate(0.0,0)" d="M5.00 0.80 L6.44 3.62 L9.36 4.0 L7.23 6.16 L7.68 9.16 L5.00 7.75 L2.32 9.16 L2.77 6.16 L0.64 4.0 L3.56 3.62 Z" fill="#f7b500" stroke="#f7b500" stroke-width="1.1" stroke-linejoin="round"/><path transform="translate(11.4,0)" d="M5.00 0.80 L6.44 3.62 L9.36 4.0 L7.23 6.16 L7.68 9.16 L5.00 7.75 L2.32 9.16 L2.77 6.16 L0.64 4.0 L3.56 3.62 Z" fill="#f7b500" stroke="#f7b500" stroke-width="1.1" stroke-linejoin="round"/><path transform="translate(22.8,0)" d="M5.00 0.80 L6.44 3.62 L9.36 4.0 L7.23 6.16 L7.68 9.16 L5.00 7.75 L2.32 9.16 L2.77 6.16 L0.64 4.0 L3.56 3.62 Z" fill="#f7b500" stroke="#f7b500" stroke-width="1.1" stroke-linejoin="round"/><path transform="translate(34.2,0)" d="M5.00 0.80 L6.44 3.62 L9.36 4.0 L7.23 6.16 L7.68 9.16 L5.00 7.75 L2.32 9.16 L2.77 6.16 L0.64 4.0 L3.56 3.62 Z" fill="#f7b500" stroke="#f7b500" stroke-width="1.1" stroke-linejoin="round"/><path transform="translate(45.6,0)" d="M5.00 0.80 L6.44 3.62 L9.36 4.0 L7.23 6.16 L7.68 9.16 L5.00 7.75 L2.32 9.16 L2.77 6.16 L0.64 4.0 L3.56 3.62 Z" fill="#fff" stroke="#f7b500" stroke-width="1" stroke-linejoin="round"/></svg>
<svg style="position:absolute;left:540.8px;top:308.6px;overflow:visible" width="57" height="10" viewBox="0 0 57 10"><path transform="translate(0.0,0)" d="M5.00 0.80 L6.44 3.62 L9.36 4.0 L7.23 6.16 L7.68 9.16 L5.00 7.75 L2.32 9.16 L2.77 6.16 L0.64 4.0 L3.56 3.62 Z" fill="#f7b500" stroke="#f7b500" stroke-width="1.1" stroke-linejoin="round"/><path transform="translate(11.4,0)" d="M5.00 0.80 L6.44 3.62 L9.36 4.0 L7.23 6.16 L7.68 9.16 L5.00 7.75 L2.32 9.16 L2.77 6.16 L0.64 4.0 L3.56 3.62 Z" fill="#f7b500" stroke="#f7b500" stroke-width="1.1" stroke-linejoin="round"/><path transform="translate(22.8,0)" d="M5.00 0.80 L6.44 3.62 L9.36 4.0 L7.23 6.16 L7.68 9.16 L5.00 7.75 L2.32 9.16 L2.77 6.16 L0.64 4.0 L3.56 3.62 Z" fill="#f7b500" stroke="#f7b500" stroke-width="1.1" stroke-linejoin="round"/><path transform="translate(34.2,0)" d="M5.00 0.80 L6.44 3.62 L9.36 4.0 L7.23 6.16 L7.68 9.16 L5.00 7.75 L2.32 9.16 L2.77 6.16 L0.64 4.0 L3.56 3.62 Z" fill="#f7b500" stroke="#f7b500" stroke-width="1.1" stroke-linejoin="round"/><path transform="translate(45.6,0)" d="M5.00 0.80 L6.44 3.62 L9.36 4.0 L7.23 6.16 L7.68 9.16 L5.00 7.75 L2.32 9.16 L2.77 6.16 L0.64 4.0 L3.56 3.62 Z" fill="#f7b500" stroke="#f7b500" stroke-width="1.1" stroke-linejoin="round"/></svg>
<svg style="position:absolute;left:540.8px;top:322.0px;overflow:visible" width="57" height="10" viewBox="0 0 57 10"><path transform="translate(0.0,0)" d="M5.00 0.80 L6.44 3.62 L9.36 4.0 L7.23 6.16 L7.68 9.16 L5.00 7.75 L2.32 9.16 L2.77 6.16 L0.64 4.0 L3.56 3.62 Z" fill="#f7b500" stroke="#f7b500" stroke-width="1.1" stroke-linejoin="round"/><path transform="translate(11.4,0)" d="M5.00 0.80 L6.44 3.62 L9.36 4.0 L7.23 6.16 L7.68 9.16 L5.00 7.75 L2.32 9.16 L2.77 6.16 L0.64 4.0 L3.56 3.62 Z" fill="#f7b500" stroke="#f7b500" stroke-width="1.1" stroke-linejoin="round"/><path transform="translate(22.8,0)" d="M5.00 0.80 L6.44 3.62 L9.36 4.0 L7.23 6.16 L7.68 9.16 L5.00 7.75 L2.32 9.16 L2.77 6.16 L0.64 4.0 L3.56 3.62 Z" fill="#f7b500" stroke="#f7b500" stroke-width="1.1" stroke-linejoin="round"/><path transform="translate(34.2,0)" d="M5.00 0.80 L6.44 3.62 L9.36 4.0 L7.23 6.16 L7.68 9.16 L5.00 7.75 L2.32 9.16 L2.77 6.16 L0.64 4.0 L3.56 3.62 Z" fill="#f7b500" stroke="#f7b500" stroke-width="1.1" stroke-linejoin="round"/><path transform="translate(45.6,0)" d="M5.00 0.80 L6.44 3.62 L9.36 4.0 L7.23 6.16 L7.68 9.16 L5.00 7.75 L2.32 9.16 L2.77 6.16 L0.64 4.0 L3.56 3.62 Z" fill="#fff" stroke="#f7b500" stroke-width="1" stroke-linejoin="round"/></svg>
<svg style="position:absolute;left:540.8px;top:362.6px;overflow:visible" width="57" height="10" viewBox="0 0 57 10"><path transform="translate(0.0,0)" d="M5.00 0.80 L6.44 3.62 L9.36 4.0 L7.23 6.16 L7.68 9.16 L5.00 7.75 L2.32 9.16 L2.77 6.16 L0.64 4.0 L3.56 3.62 Z" fill="#f7b500" stroke="#f7b500" stroke-width="1.1" stroke-linejoin="round"/><path transform="translate(11.4,0)" d="M5.00 0.80 L6.44 3.62 L9.36 4.0 L7.23 6.16 L7.68 9.16 L5.00 7.75 L2.32 9.16 L2.77 6.16 L0.64 4.0 L3.56 3.62 Z" fill="#f7b500" stroke="#f7b500" stroke-width="1.1" stroke-linejoin="round"/><path transform="translate(22.8,0)" d="M5.00 0.80 L6.44 3.62 L9.36 4.0 L7.23 6.16 L7.68 9.16 L5.00 7.75 L2.32 9.16 L2.77 6.16 L0.64 4.0 L3.56 3.62 Z" fill="#f7b500" stroke="#f7b500" stroke-width="1.1" stroke-linejoin="round"/><path transform="translate(34.2,0)" d="M5.00 0.80 L6.44 3.62 L9.36 4.0 L7.23 6.16 L7.68 9.16 L5.00 7.75 L2.32 9.16 L2.77 6.16 L0.64 4.0 L3.56 3.62 Z" fill="#f7b500" stroke="#f7b500" stroke-width="1.1" stroke-linejoin="round"/><path transform="translate(45.6,0)" d="M5.00 0.80 L6.44 3.62 L9.36 4.0 L7.23 6.16 L7.68 9.16 L5.00 7.75 L2.32 9.16 L2.77 6.16 L0.64 4.0 L3.56 3.62 Z" fill="#fff" stroke="#f7b500" stroke-width="1" stroke-linejoin="round"/></svg>
<svg style="position:absolute;left:540.8px;top:376.0px;overflow:visible" width="57" height="10" viewBox="0 0 57 10"><path transform="translate(0.0,0)" d="M5.00 0.80 L6.44 3.62 L9.36 4.0 L7.23 6.16 L7.68 9.16 L5.00 7.75 L2.32 9.16 L2.77 6.16 L0.64 4.0 L3.56 3.62 Z" fill="#fff" stroke="#f7b500" stroke-width="1" stroke-linejoin="round"/><path transform="translate(11.4,0)" d="M5.00 0.80 L6.44 3.62 L9.36 4.0 L7.23 6.16 L7.68 9.16 L5.00 7.75 L2.32 9.16 L2.77 6.16 L0.64 4.0 L3.56 3.62 Z" fill="#fff" stroke="#f7b500" stroke-width="1" stroke-linejoin="round"/><path transform="translate(22.8,0)" d="M5.00 0.80 L6.44 3.62 L9.36 4.0 L7.23 6.16 L7.68 9.16 L5.00 7.75 L2.32 9.16 L2.77 6.16 L0.64 4.0 L3.56 3.62 Z" fill="#fff" stroke="#f7b500" stroke-width="1" stroke-linejoin="round"/><path transform="translate(34.2,0)" d="M5.00 0.80 L6.44 3.62 L9.36 4.0 L7.23 6.16 L7.68 9.16 L5.00 7.75 L2.32 9.16 L2.77 6.16 L0.64 4.0 L3.56 3.62 Z" fill="#fff" stroke="#f7b500" stroke-width="1" stroke-linejoin="round"/><path transform="translate(45.6,0)" d="M5.00 0.80 L6.44 3.62 L9.36 4.0 L7.23 6.16 L7.68 9.16 L5.00 7.75 L2.32 9.16 L2.77 6.16 L0.64 4.0 L3.56 3.62 Z" fill="#fff" stroke="#f7b500" stroke-width="1" stroke-linejoin="round"/></svg>
<svg style="position:absolute;left:540.8px;top:421.6px;overflow:visible" width="57" height="10" viewBox="0 0 57 10"><path transform="translate(0.0,0)" d="M5.00 0.80 L6.44 3.62 L9.36 4.0 L7.23 6.16 L7.68 9.16 L5.00 7.75 L2.32 9.16 L2.77 6.16 L0.64 4.0 L3.56 3.62 Z" fill="#f7b500" stroke="#f7b500" stroke-width="1.1" stroke-linejoin="round"/><path transform="translate(11.4,0)" d="M5.00 0.80 L6.44 3.62 L9.36 4.0 L7.23 6.16 L7.68 9.16 L5.00 7.75 L2.32 9.16 L2.77 6.16 L0.64 4.0 L3.56 3.62 Z" fill="#f7b500" stroke="#f7b500" stroke-width="1.1" stroke-linejoin="round"/><path transform="translate(22.8,0)" d="M5.00 0.80 L6.44 3.62 L9.36 4.0 L7.23 6.16 L7.68 9.16 L5.00 7.75 L2.32 9.16 L2.77 6.16 L0.64 4.0 L3.56 3.62 Z" fill="#f7b500" stroke="#f7b500" stroke-width="1.1" stroke-linejoin="round"/><path transform="translate(34.2,0)" d="M5.00 0.80 L6.44 3.62 L9.36 4.0 L7.23 6.16 L7.68 9.16 L5.00 7.75 L2.32 9.16 L2.77 6.16 L0.64 4.0 L3.56 3.62 Z" fill="#f7b500" stroke="#f7b500" stroke-width="1.1" stroke-linejoin="round"/><path transform="translate(45.6,0)" d="M5.00 0.80 L6.44 3.62 L9.36 4.0 L7.23 6.16 L7.68 9.16 L5.00 7.75 L2.32 9.16 L2.77 6.16 L0.64 4.0 L3.56 3.62 Z" fill="#f7b500" stroke="#f7b500" stroke-width="1.1" stroke-linejoin="round"/></svg>
<svg style="position:absolute;left:540.8px;top:435.0px;overflow:visible" width="57" height="10" viewBox="0 0 57 10"><path transform="translate(0.0,0)" d="M5.00 0.80 L6.44 3.62 L9.36 4.0 L7.23 6.16 L7.68 9.16 L5.00 7.75 L2.32 9.16 L2.77 6.16 L0.64 4.0 L3.56 3.62 Z" fill="#f7b500" stroke="#f7b500" stroke-width="1.1" stroke-linejoin="round"/><path transform="translate(11.4,0)" d="M5.00 0.80 L6.44 3.62 L9.36 4.0 L7.23 6.16 L7.68 9.16 L5.00 7.75 L2.32 9.16 L2.77 6.16 L0.64 4.0 L3.56 3.62 Z" fill="#f7b500" stroke="#f7b500" stroke-width="1.1" stroke-linejoin="round"/><path transform="translate(22.8,0)" d="M5.00 0.80 L6.44 3.62 L9.36 4.0 L7.23 6.16 L7.68 9.16 L5.00 7.75 L2.32 9.16 L2.77 6.16 L0.64 4.0 L3.56 3.62 Z" fill="#f7b500" stroke="#f7b500" stroke-width="1.1" stroke-linejoin="round"/><path transform="translate(34.2,0)" d="M5.00 0.80 L6.44 3.62 L9.36 4.0 L7.23 6.16 L7.68 9.16 L5.00 7.75 L2.32 9.16 L2.77 6.16 L0.64 4.0 L3.56 3.62 Z" fill="#f7b500" stroke="#f7b500" stroke-width="1.1" stroke-linejoin="round"/><path transform="translate(45.6,0)" d="M5.00 0.80 L6.44 3.62 L9.36 4.0 L7.23 6.16 L7.68 9.16 L5.00 7.75 L2.32 9.16 L2.77 6.16 L0.64 4.0 L3.56 3.62 Z" fill="#f7b500" stroke="#f7b500" stroke-width="1.1" stroke-linejoin="round"/></svg>
<svg style="position:absolute;left:540.8px;top:503.1px;overflow:visible" width="57" height="10" viewBox="0 0 57 10"><path transform="translate(0.0,0)" d="M5.00 0.80 L6.44 3.62 L9.36 4.0 L7.23 6.16 L7.68 9.16 L5.00 7.75 L2.32 9.16 L2.77 6.16 L0.64 4.0 L3.56 3.62 Z" fill="#f7b500" stroke="#f7b500" stroke-width="1.1" stroke-linejoin="round"/><path transform="translate(11.4,0)" d="M5.00 0.80 L6.44 3.62 L9.36 4.0 L7.23 6.16 L7.68 9.16 L5.00 7.75 L2.32 9.16 L2.77 6.16 L0.64 4.0 L3.56 3.62 Z" fill="#f7b500" stroke="#f7b500" stroke-width="1.1" stroke-linejoin="round"/><path transform="translate(22.8,0)" d="M5.00 0.80 L6.44 3.62 L9.36 4.0 L7.23 6.16 L7.68 9.16 L5.00 7.75 L2.32 9.16 L2.77 6.16 L0.64 4.0 L3.56 3.62 Z" fill="#f7b500" stroke="#f7b500" stroke-width="1.1" stroke-linejoin="round"/><path transform="translate(34.2,0)" d="M5.00 0.80 L6.44 3.62 L9.36 4.0 L7.23 6.16 L7.68 9.16 L5.00 7.75 L2.32 9.16 L2.77 6.16 L0.64 4.0 L3.56 3.62 Z" fill="#fff" stroke="#f7b500" stroke-width="1" stroke-linejoin="round"/><path transform="translate(45.6,0)" d="M5.00 0.80 L6.44 3.62 L9.36 4.0 L7.23 6.16 L7.68 9.16 L5.00 7.75 L2.32 9.16 L2.77 6.16 L0.64 4.0 L3.56 3.62 Z" fill="#fff" stroke="#f7b500" stroke-width="1" stroke-linejoin="round"/></svg>
<svg style="position:absolute;left:540.8px;top:516.5px;overflow:visible" width="57" height="10" viewBox="0 0 57 10"><path transform="translate(0.0,0)" d="M5.00 0.80 L6.44 3.62 L9.36 4.0 L7.23 6.16 L7.68 9.16 L5.00 7.75 L2.32 9.16 L2.77 6.16 L0.64 4.0 L3.56 3.62 Z" fill="#fff" stroke="#f7b500" stroke-width="1" stroke-linejoin="round"/><path transform="translate(11.4,0)" d="M5.00 0.80 L6.44 3.62 L9.36 4.0 L7.23 6.16 L7.68 9.16 L5.00 7.75 L2.32 9.16 L2.77 6.16 L0.64 4.0 L3.56 3.62 Z" fill="#fff" stroke="#f7b500" stroke-width="1" stroke-linejoin="round"/><path transform="translate(22.8,0)" d="M5.00 0.80 L6.44 3.62 L9.36 4.0 L7.23 6.16 L7.68 9.16 L5.00 7.75 L2.32 9.16 L2.77 6.16 L0.64 4.0 L3.56 3.62 Z" fill="#fff" stroke="#f7b500" stroke-width="1" stroke-linejoin="round"/><path transform="translate(34.2,0)" d="M5.00 0.80 L6.44 3.62 L9.36 4.0 L7.23 6.16 L7.68 9.16 L5.00 7.75 L2.32 9.16 L2.77 6.16 L0.64 4.0 L3.56 3.62 Z" fill="#fff" stroke="#f7b500" stroke-width="1" stroke-linejoin="round"/><path transform="translate(45.6,0)" d="M5.00 0.80 L6.44 3.62 L9.36 4.0 L7.23 6.16 L7.68 9.16 L5.00 7.75 L2.32 9.16 L2.77 6.16 L0.64 4.0 L3.56 3.62 Z" fill="#fff" stroke="#f7b500" stroke-width="1" stroke-linejoin="round"/></svg>
<svg style="position:absolute;left:540.8px;top:636.6px;overflow:visible" width="57" height="10" viewBox="0 0 57 10"><path transform="translate(0.0,0)" d="M5.00 0.80 L6.44 3.62 L9.36 4.0 L7.23 6.16 L7.68 9.16 L5.00 7.75 L2.32 9.16 L2.77 6.16 L0.64 4.0 L3.56 3.62 Z" fill="#f7b500" stroke="#f7b500" stroke-width="1.1" stroke-linejoin="round"/><path transform="translate(11.4,0)" d="M5.00 0.80 L6.44 3.62 L9.36 4.0 L7.23 6.16 L7.68 9.16 L5.00 7.75 L2.32 9.16 L2.77 6.16 L0.64 4.0 L3.56 3.62 Z" fill="#f7b500" stroke="#f7b500" stroke-width="1.1" stroke-linejoin="round"/><path transform="translate(22.8,0)" d="M5.00 0.80 L6.44 3.62 L9.36 4.0 L7.23 6.16 L7.68 9.16 L5.00 7.75 L2.32 9.16 L2.77 6.16 L0.64 4.0 L3.56 3.62 Z" fill="#f7b500" stroke="#f7b500" stroke-width="1.1" stroke-linejoin="round"/><path transform="translate(34.2,0)" d="M5.00 0.80 L6.44 3.62 L9.36 4.0 L7.23 6.16 L7.68 9.16 L5.00 7.75 L2.32 9.16 L2.77 6.16 L0.64 4.0 L3.56 3.62 Z" fill="#f7b500" stroke="#f7b500" stroke-width="1.1" stroke-linejoin="round"/><path transform="translate(45.6,0)" d="M5.00 0.80 L6.44 3.62 L9.36 4.0 L7.23 6.16 L7.68 9.16 L5.00 7.75 L2.32 9.16 L2.77 6.16 L0.64 4.0 L3.56 3.62 Z" fill="#f7b500" stroke="#f7b500" stroke-width="1.1" stroke-linejoin="round"/></svg>
<svg style="position:absolute;left:540.8px;top:650.0px;overflow:visible" width="57" height="10" viewBox="0 0 57 10"><path transform="translate(0.0,0)" d="M5.00 0.80 L6.44 3.62 L9.36 4.0 L7.23 6.16 L7.68 9.16 L5.00 7.75 L2.32 9.16 L2.77 6.16 L0.64 4.0 L3.56 3.62 Z" fill="#f7b500" stroke="#f7b500" stroke-width="1.1" stroke-linejoin="round"/><path transform="translate(11.4,0)" d="M5.00 0.80 L6.44 3.62 L9.36 4.0 L7.23 6.16 L7.68 9.16 L5.00 7.75 L2.32 9.16 L2.77 6.16 L0.64 4.0 L3.56 3.62 Z" fill="#f7b500" stroke="#f7b500" stroke-width="1.1" stroke-linejoin="round"/><path transform="translate(22.8,0)" d="M5.00 0.80 L6.44 3.62 L9.36 4.0 L7.23 6.16 L7.68 9.16 L5.00 7.75 L2.32 9.16 L2.77 6.16 L0.64 4.0 L3.56 3.62 Z" fill="#f7b500" stroke="#f7b500" stroke-width="1.1" stroke-linejoin="round"/><path transform="translate(34.2,0)" d="M5.00 0.80 L6.44 3.62 L9.36 4.0 L7.23 6.16 L7.68 9.16 L5.00 7.75 L2.32 9.16 L2.77 6.16 L0.64 4.0 L3.56 3.62 Z" fill="#f7b500" stroke="#f7b500" stroke-width="1.1" stroke-linejoin="round"/><path transform="translate(45.6,0)" d="M5.00 0.80 L6.44 3.62 L9.36 4.0 L7.23 6.16 L7.68 9.16 L5.00 7.75 L2.32 9.16 L2.77 6.16 L0.64 4.0 L3.56 3.62 Z" fill="#f7b500" stroke="#f7b500" stroke-width="1.1" stroke-linejoin="round"/></svg>
<div style="position:absolute;left:611.0px;top:248.6px;width:12.6px;height:12.4px;border-radius:2px;background:#1fcc1f"></div>
<div style="position:absolute;left:625.2px;top:248.6px;width:12.6px;height:12.4px;border-radius:2px;background:#dd1414"></div>
<div style="position:absolute;left:611.0px;top:264.8px;width:12.6px;height:12.4px;border-radius:2px;background:#1fcc66"></div>
<div style="position:absolute;left:625.2px;top:264.8px;width:12.6px;height:12.4px;border-radius:2px;background:#1414cc"></div>
<div style="position:absolute;left:611.0px;top:307.6px;width:12.6px;height:12.4px;border-radius:2px;background:#dd1414"></div>
<div style="position:absolute;left:611.0px;top:361.6px;width:12.6px;height:12.4px;border-radius:2px;background:#1dcfd5"></div>
<div style="position:absolute;left:625.2px;top:361.6px;width:12.6px;height:12.4px;border-radius:2px;background:#1414cc"></div>
<div style="position:absolute;left:611.0px;top:377.8px;width:12.6px;height:12.4px;border-radius:2px;background:#dd1414"></div>
<div style="position:absolute;left:611.0px;top:420.6px;width:12.6px;height:12.4px;border-radius:2px;background:#1dcfd5"></div>
<div style="position:absolute;left:625.2px;top:420.6px;width:12.6px;height:12.4px;border-radius:2px;background:#1414cc"></div>
<div style="position:absolute;left:611.0px;top:502.1px;width:12.6px;height:12.4px;border-radius:2px;background:#1fcc66"></div>
<div style="position:absolute;left:611.0px;top:635.6px;width:12.6px;height:12.4px;border-radius:2px;background:#1dcfd5"></div>
<div style="position:absolute;left:658px;top:248px;width:30px;height:44px;background:#fff;box-shadow:0 0 1px rgba(0,0,0,.1)"></div>
<svg style="position:absolute;left:658px;top:248px;overflow:visible" width="30" height="44" viewBox="0 0 30 44"><rect x="3" y="3" width="4" height="0.8" fill="#999"/><rect x="21" y="3" width="5" height="0.8" fill="#999"/><rect x="3" y="9" width="24" height="14" fill="#111"/><path d="M4 11.5 H26 M3.5 14.5 H25 M4 17.5 H26 M5 20.5 H24" stroke="#eee" stroke-width="1.4"/><rect x="3" y="26" width="18" height="13" fill="#111"/><circle cx="8" cy="31" r="3" fill="#777"/><rect x="13" y="27" width="7" height="10" fill="#555"/></svg>
<div style="position:absolute;left:657px;top:360px;width:31.5px;height:46px;background:#fff;box-shadow:0 0 1px rgba(0,0,0,.1)"></div>
<svg style="position:absolute;left:657px;top:360px;overflow:visible" width="32" height="46" viewBox="0 0 32 46"><rect x="5" y="6" width="15" height="9" fill="none" stroke="#bbb" stroke-width="0.6"/><path d="M8 15 V7 M15 15 V7" stroke="#999" stroke-width="0.7"/><path d="M7 18 H18" stroke="#999" stroke-width="1"/><rect x="9.5" y="24" width="13.5" height="17" fill="#0a0a0a"/><rect x="14" y="26" width="6" height="6" fill="#333"/><path d="M22 20 H25 M24 43 H27" stroke="#bbb" stroke-width="0.7"/></svg>
<svg style="position:absolute;left:659px;top:420px;overflow:visible" width="30" height="42" viewBox="0 0 30 42"><path d="M2 3 Q8 1 14 3 T28 3" stroke="#888" stroke-width="0.8" fill="none"/><rect x="4" y="5" width="5" height="2" fill="#999"/><rect x="19" y="5" width="6" height="2" fill="#999"/><rect x="2" y="8" width="9" height="2" fill="#aaa"/><path d="M14 4 V38" stroke="#999" stroke-width="0.7"/><rect x="12" y="12" width="5" height="2.5" fill="#999"/><rect x="2" y="19" width="10" height="2" fill="#999"/><rect x="18" y="19" width="9" height="2" fill="#aaa"/><rect x="2" y="23" width="9" height="2" fill="#999"/><rect x="19" y="22" width="8" height="5" fill="none" stroke="#999" stroke-width="0.6"/><rect x="2" y="27" width="10" height="2" fill="#aaa"/><rect x="3" y="31" width="9" height="2" fill="#999"/><rect x="12" y="34" width="5" height="2" fill="#999"/><rect x="21" y="38" width="7" height="2" fill="#aaa"/></svg>
<svg style="position:absolute;left:659px;top:636px;overflow:visible" width="24" height="26" viewBox="0 0 24 26"><path d="M1 2 H6 M18 2 H23 M12 2 V4" stroke="#bbb" stroke-width="0.7"/><rect x="1" y="8" width="21" height="7" fill="#999"/><rect x="1" y="17" width="21" height="7" fill="#999"/><path d="M1 11.5 H22 M6 8 V24 M11 8 V24 M16 8 V24 M1 20.5 H22" stroke="#ddd" stroke-width="0.6"/></svg>
<div style="position:absolute;left:935.5px;top:148.5px;width:6.5px;height:317px;background:#f1f1f1"></div>
<div style="position:absolute;left:935.8px;top:155.5px;width:6px;height:101.5px;background:#c1c1c1"></div>
<svg style="position:absolute;left:936px;top:150px;overflow:visible" width="6" height="4" viewBox="0 0 6 4"><path d="M1 3 L3 1 L5 3 Z" fill="#505050"/></svg>
<svg style="position:absolute;left:936px;top:459.5px;overflow:visible" width="6" height="4" viewBox="0 0 6 4"><path d="M1 1 L3 3 L5 1 Z" fill="#505050"/></svg>
</div></div>
</body></html>
